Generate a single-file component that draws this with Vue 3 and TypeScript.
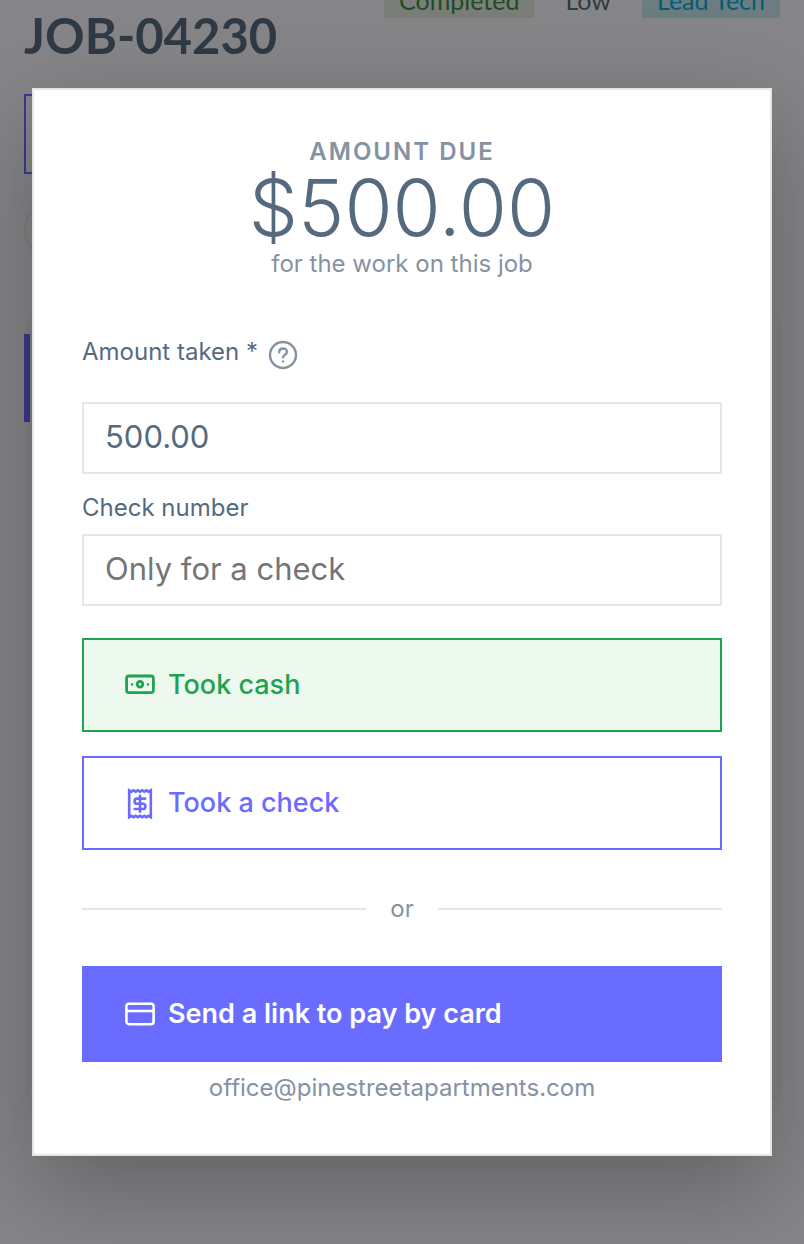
<script setup lang="ts">
import { ref } from 'vue'

const amount = ref('500.00')
const checkNumber = ref('')
</script>

<template>
  <div class="screen">
    <div class="page">
      <header class="page-head">
        <h1>JOB-04230</h1>
        <div class="chips">
          <span class="chip done">Completed</span>
          <span class="chip">Low</span>
          <span class="chip lead">Lead Tech</span>
        </div>
      </header>
      <div class="outline-box"></div>
      <div class="round"></div>
      <div class="accent"></div>
      <div class="card"></div>
    </div>

    <div class="overlay">
      <form class="modal" role="dialog" aria-label="Take payment" @submit.prevent>
        <div class="due">
          <div class="due-label">AMOUNT DUE</div>
          <div class="due-value">$500.00</div>
          <div>for the work on this job</div>
        </div>

        <div class="label-row">
          <label for="amount">Amount taken *</label>
          <button type="button" class="help" aria-label="Help">
            <svg viewBox="0 0 32 32" fill="none" stroke="currentColor" stroke-width="2.4" stroke-linecap="round">
              <circle cx="16" cy="16" r="13" />
              <path d="M12.2 13.2c0-2.300 1.700-3.700 3.900-3.700s3.900 1.500 3.900 3.500c0 2.700-3.900 2.900-3.900 5.200" />
              <path d="M16 22.400v.2" />
            </svg>
          </button>
        </div>
        <input id="amount" v-model="amount" type="text" inputmode="decimal" />

        <label class="check-label" for="check">Check number</label>
        <input id="check" v-model="checkNumber" type="text" placeholder="Only for a check" />

        <div class="actions">
          <button type="button" class="btn cash">
            <svg viewBox="0 0 32 32" fill="none" stroke="currentColor" stroke-width="2.8">
              <rect x="2.6" y="7" width="26.8" height="16.6" rx="2.4" />
              <circle cx="16" cy="15.3" r="2.8" />
              <path d="M7 15.3h2.200M22.800 15.3H25" stroke-width="2.2" />
            </svg>
            <span>Took cash</span>
          </button>
          <button type="button" class="btn check">
            <svg viewBox="0 0 32 32" fill="none" stroke="currentColor" stroke-width="2.6">
              <path d="M5.200 3.300 7.400 4.700 9.500 3.300 11.700 4.700 13.800 3.300 16 4.700 18.200 3.300 20.300 4.700 22.500 3.300 24.600 4.700 26.800 3.300V30.200L24.600 28.800 22.500 30.200 20.300 28.800 18.200 30.200 16 28.800 13.800 30.200 11.700 28.800 9.500 30.200 7.400 28.800 5.200 30.200Z" />
              <path d="M21.200 11.600h-8a2.600 2.600 0 0 0 0 5.200h5.600a2.600 2.600 0 0 1 0 5.200H10.600M16 8.800v16" stroke-linecap="round" stroke-width="2.6" />
            </svg>
            <span>Took a check</span>
          </button>
        </div>

        <div class="divider"><span>or</span></div>

        <button type="submit" class="btn send">
          <svg viewBox="0 0 32 32" fill="none" stroke="currentColor" stroke-width="2.6">
            <rect x="2.4" y="5.800" width="27.2" height="20.4" rx="2.6" />
            <path d="M2.4 13h27.2" />
          </svg>
          <span>Send a link to pay by card</span>
        </button>
        <div class="email">office@pinestreetapartments.com</div>
      </form>
    </div>
  </div>
</template>

<style>
body {
  margin: 0;
  background: #f5f5f9;
}
</style>

<style scoped>
.screen {
  position: relative;
  min-height: 100vh;
  overflow: hidden;
  font-family: Inter, 'Liberation Sans', sans-serif;
  font-size: 24px;
  line-height: 28px;
  color: #566a7f;
}
.page {
  margin-top: -22px;
  padding: 0 24px;
}
.page-head {
  display: flex;
  justify-content: space-between;
  align-items: flex-start;
  height: 116px;
  font-family: Lato, sans-serif;
}
h1 {
  margin: 0;
  padding-top: 33px;
  font-size: 49px;
  line-height: 48px;
  font-weight: 700;
}
.chips {
  display: flex;
  gap: 16px;
  font-size: 25px;
}
.chip {
  padding: 8px 15px 4px;
}
.done {
  background: #dce6dc;
  color: #3a8a3c;
}
.lead {
  background: #c4e4ec;
  color: #03a9d4;
}
.outline-box {
  box-sizing: border-box;
  width: 50%;
  height: 80px;
  border: 2px solid #696cff;
}
.round {
  width: 56px;
  height: 56px;
  margin-top: 28px;
  box-sizing: border-box;
  border: 2px solid #e6e6ea;
  border-radius: 50%;
}
.accent {
  width: 6px;
  height: 88px;
  margin-top: 76px;
  background: #696cff;
}
.card {
  height: 776px;
  margin: -102px 2px 0 6px;
  box-shadow: 0 0 6px rgba(67, 89, 113, 0.15);
}
.overlay {
  position: absolute;
  inset: 0;
  padding: 88px 32px;
  background: rgba(0, 0, 0, 0.45);
}
.modal {
  box-sizing: border-box;
  padding: 48px;
  border: 2px solid #e4e6e8;
  background: #fff;
  box-shadow: 0 32px 96px rgba(0, 0, 0, 0.28);
}
.due {
  text-align: center;
  color: #8592a3;
}
.due-label {
  font-weight: 600;
  letter-spacing: 2px;
}
.due-value {
  font-size: 78px;
  line-height: 84px;
  font-weight: 350;
  color: #566a7f;
}
.label-row {
  display: flex;
  gap: 9px;
  margin: 60px 0 31px;
}
.help {
  display: flex;
  margin-top: 1px;
  padding: 0;
  border: 0;
  background: none;
  color: #8592a3;
}
svg {
  width: 32px;
  height: 32px;
  flex: none;
}
input {
  display: block;
  box-sizing: border-box;
  width: 100%;
  height: 72px;
  padding: 0 21px 4px;
  border: 2px solid #e4e6e8;
  border-radius: 0;
  background: #fff;
  font: inherit;
  font-size: 31px;
  color: #566a7f;
}
input::placeholder {
  color: #757575;
  opacity: 1;
}
.check-label {
  display: block;
  margin: 20px 0 12px;
}
.actions {
  display: grid;
  gap: 24px;
  margin-top: 32px;
}
.btn {
  display: flex;
  align-items: center;
  gap: 12px;
  box-sizing: border-box;
  width: 100%;
  height: 94px;
  padding: 0 40px;
  border: 2px solid currentColor;
  font: inherit;
  font-size: 27px;
  font-weight: 500;
}
.cash {
  background: #edf8ef;
  color: #1ea44f;
}
.check {
  background: #fff;
  color: #696cff;
}
.divider {
  display: flex;
  align-items: center;
  gap: 24px;
  margin: 45px 0 43px;
  color: #8592a3;
}
.divider::before,
.divider::after {
  content: '';
  flex: 1;
  height: 2px;
  background: #e4e6e8;
}
.send {
  height: 96px;
  border-color: #696cff;
  background: #696cff;
  color: #fff;
  font-weight: 600;
}
.email {
  margin-top: 8px;
  line-height: 36px;
  text-align: center;
  color: #8592a3;
}
</style>
